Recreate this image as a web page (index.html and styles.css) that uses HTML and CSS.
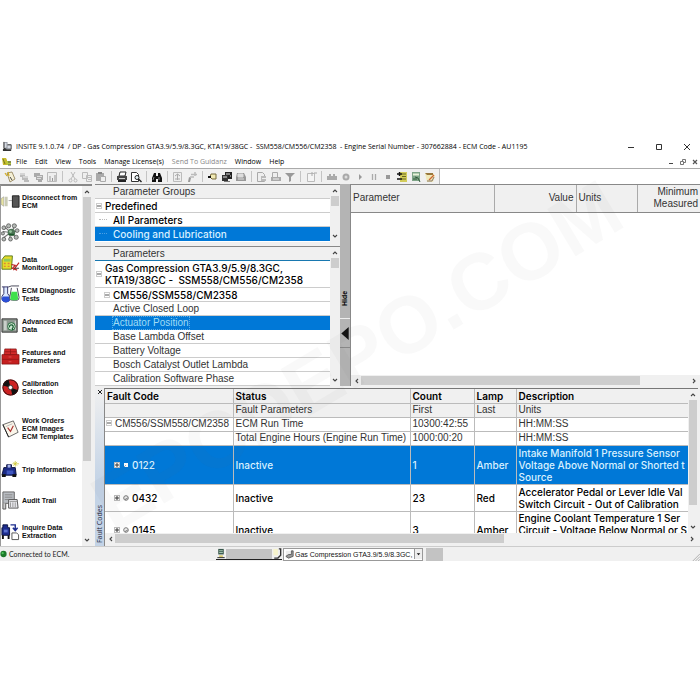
FILE: index.html
```
<!DOCTYPE html>
<html lang="en">
<head>
<meta charset="utf-8">
<title>INSITE 9.1.0.74</title>
<link rel="stylesheet" href="styles.css">
</head>
<body>
<svg class="defs" aria-hidden="true">
  <defs>
    <symbol id="up" viewBox="0 0 8 8"><path d="M2 5 4 3 6 5" fill="none" stroke="#444" stroke-width="1.1"/></symbol>
    <symbol id="down" viewBox="0 0 8 8"><path d="M2 3 4 5 6 3" fill="none" stroke="#444" stroke-width="1.1"/></symbol>
    <symbol id="left" viewBox="0 0 8 8"><path d="M5 2 3 4 5 6" fill="none" stroke="#444" stroke-width="1.1"/></symbol>
    <symbol id="right" viewBox="0 0 8 8"><path d="M3 2 5 4 3 6" fill="none" stroke="#444" stroke-width="1.1"/></symbol>
    <symbol id="minus" viewBox="0 0 6 6"><rect x=".5" y=".5" width="5" height="5" fill="#fff" stroke="#ccc"/><path d="M1 3h4" stroke="#555"/></symbol>
    <symbol id="plus" viewBox="0 0 6 6"><rect x=".5" y=".5" width="5" height="5" fill="#fff" stroke="#bbb"/><path d="M1 3h4M3 1v4" stroke="#333"/></symbol>
    <symbol id="ball" viewBox="0 0 6 6"><circle cx="3" cy="3" r="2.3" fill="#eee" stroke="#777"/><path d="M2 4.5 4.7 3" stroke="#555" stroke-width=".7"/></symbol>
    <symbol id="flag" viewBox="0 0 6 6"><path d="M1 1h4v4H1z" fill="#fff"/><path d="M1 5l2-2" stroke="#9ab"/></symbol>
  </defs>
</svg>
<div class="window">
  <header class="titlebar">
    <svg class="ic12" viewBox="0 0 12 12"><path d="M2 1h4v3h4v5H4V7H2z" fill="#8d929c"/><path d="M3 2h2v5H3zM6 5h4v3H6z" fill="#d7dbe2"/><path d="M1 9l2-2 2 2h5v2H1z" fill="#333"/><path d="M2 1v7M6 4h4M10 4v5" stroke="#444" fill="none"/></svg>
    <h1>INSITE 9.1.0.74&nbsp; / DP - Gas Compression GTA3.9/5.9/8.3GC, KTA19/38GC -&nbsp; SSM558/CM556/CM2358&nbsp; - Engine Serial Number - 307662884 - ECM Code - AU1195</h1>
    <div class="winbtns">
      <button aria-label="Minimize"><svg viewBox="0 0 8 8"><path d="M1 4.5h6" stroke="#333"/></svg></button>
      <button aria-label="Maximize"><svg viewBox="0 0 8 8"><path d="M1.5 1.5h5v5h-5z" fill="none" stroke="#333"/></svg></button>
      <button aria-label="Close"><svg viewBox="0 0 8 8"><path d="M1 1l6 6M7 1l-6 6" stroke="#333"/></svg></button>
    </div>
  </header>
  <nav class="menubar">
    <svg class="ic10" viewBox="0 0 10 10"><path d="M0 1h4l1 2v5H1z" fill="#c9b92d"/><path d="M1 2l2 5" stroke="#6f7d20" fill="none"/><path d="M4 4h5v4H5z" fill="#b6c93b"/><path d="M6 5h3M6 8h3" stroke="#555"/></svg>
    <button>File</button><button>Edit</button><button>View</button><button>Tools</button><button>Manage License(s)</button><button disabled>Send To Guidanz</button><button>Window</button><button>Help</button>
    <div class="docbtns">
      <button aria-label="Minimize document"><svg viewBox="0 0 8 8"><path d="M2 5.5h4" stroke="#444"/></svg></button>
      <button aria-label="Restore document"><svg viewBox="0 0 8 8"><path d="M1.500 3.500h3v3h-3zM3.500 3V1.500h3v3H5" fill="none" stroke="#666" stroke-width=".9"/></svg></button>
      <button aria-label="Close document"><svg viewBox="0 0 8 8"><path d="M2 2l4 4M6 2l-4 4" stroke="#555" stroke-width="1.200"/></svg></button>
    </div>
  </nav>
  <div class="toolbar" role="toolbar">
    <div class="tools">
      <button aria-label="Connect"><svg viewBox="0 0 12 12"><path d="M3 2l5-1 3 7-5 3z" fill="#f4efd6" stroke="#8a7a50" stroke-width=".8"/><path d="M1 2l2 3M4 1l1 4" stroke="#d2ad22" stroke-width="1.200"/><path d="M6 6l2 3" stroke="#444"/></svg></button>
      <button aria-label="Template" disabled><svg viewBox="0 0 12 12"><path d="M2 2h5v4H2zM4 5h6v4H4zM6 9h5v2H6z" fill="#bbb"/><path d="M2 3h5M5 6h5" stroke="#eee"/></svg></button>
      <button aria-label="Transfer" disabled><svg viewBox="0 0 12 12"><path d="M2 2h6v4H2zM4 4h7v5H4zM6 9h4v2H6z" fill="#aaa"/><path d="M5 5.500h5M5 7.500h4" stroke="#ddd"/></svg></button>
      <button aria-label="Chart" disabled><svg viewBox="0 0 12 12"><path d="M1.500 1.500h9v9h-9z" fill="#eee" stroke="#bbb"/><path d="M4 10V5M6.500 10V7M9 10V4" stroke="#999"/></svg></button>
      <i></i>
      <button aria-label="Cut" disabled><svg viewBox="0 0 12 12"><path d="M4 1l4 7M8 1L4 8" stroke="#bbb"/><circle cx="3.500" cy="9.500" r="1.500" fill="none" stroke="#bbb"/><circle cx="8.500" cy="9.500" r="1.500" fill="none" stroke="#bbb"/></svg></button>
      <button aria-label="Copy" disabled><svg viewBox="0 0 12 12"><path d="M1.500 1.500h5v6h-5zM5.500 4.500h5v6h-5z" fill="#eee" stroke="#bbb"/><path d="M7 6.500h3M7 8.500h3" stroke="#bbb"/></svg></button>
      <button aria-label="Paste" disabled><svg viewBox="0 0 12 12"><path d="M1 2h8v8H1z" fill="#aaa"/><path d="M3 1h4v2H3z" fill="#888"/><path d="M5.500 5.500h5v5h-5z" fill="#eee" stroke="#aaa"/></svg></button>
      <i></i>
      <button aria-label="Print"><svg viewBox="0 0 12 12"><path d="M4 1h6l-1 4H3z" fill="#fff" stroke="#222"/><path d="M1 5h10v4H1z" fill="#444"/><path d="M2 9h8v2H2z" fill="#222"/><path d="M3 7.500h6" stroke="#ccc"/></svg></button>
      <button aria-label="Print preview"><svg viewBox="0 0 12 12"><path d="M1.500 1.500h5l2 2v7h-7z" fill="#fff" stroke="#333"/><circle cx="7" cy="6.500" r="2" fill="#e8f4f8" stroke="#222"/><path d="M8.500 8l3 3" stroke="#222" stroke-width="1.400"/></svg></button>
      <i></i>
      <button aria-label="Find"><svg viewBox="0 0 12 12"><path d="M3 2h2v3h2V2h2l2 5v4H7V8H5v3H1V7z" fill="#111"/><path d="M3 6l-1 3M8 6v3" stroke="#fff" stroke-width=".5"/></svg></button>
      <i></i>
      <button aria-label="Detail" disabled><svg viewBox="0 0 12 12"><path d="M1.500 1.500h8v9h-8z" fill="#eee" stroke="#bbb"/><path d="M5.500 3v6M3 5l2.500-2L8 5M3 8h5" fill="none" stroke="#aaa"/></svg></button>
      <button aria-label="Reset" disabled><svg viewBox="0 0 12 12"><path d="M5 3.500h6M9 1v4M4 6h4" stroke="#bbb" stroke-width="1.500"/><path d="M3 6l2 1-1 4H2z" fill="#999"/></svg></button>
      <i></i>
      <button aria-label="Disconnect"><svg viewBox="0 0 12 12"><path d="M4 3h5v5H5L3 6z" fill="#f1eab4" stroke="#776a3c"/><path d="M1 6h3" stroke="#111" stroke-width="2"/></svg></button>
      <button aria-label="Work order"><svg viewBox="0 0 12 12"><path d="M4 1h7v7H4z" fill="#222"/><path d="M1 4h6v6H1z" fill="#333"/><path d="M5 3h4M2 6h4M9 5h1" stroke="#ddd"/><path d="M3 10h6v1H3z" fill="#777"/></svg></button>
      <button aria-label="Save" disabled><svg viewBox="0 0 12 12"><path d="M2 2h7l2 4v4H1V6z" fill="#999"/><path d="M3 3h5v3H3zM3 8h6" fill="#ddd" stroke="#ddd"/></svg></button>
      <i></i>
      <button aria-label="Report" disabled><svg viewBox="0 0 12 12"><path d="M1.500 1.500h5l2 2v7h-7z" fill="#eee" stroke="#aaa"/><path d="M5 5h5v5H5z" fill="#bbb"/><path d="M6 7.500h4" stroke="#eee"/></svg></button>
      <button aria-label="Snapshot" disabled><svg viewBox="0 0 12 12"><path d="M2.500 1.500h5v5h-5z" fill="#eee" stroke="#aaa"/><path d="M1 6h10v4H1z" fill="#aaa"/><path d="M3 8h6" stroke="#eee"/></svg></button>
      <button aria-label="Filter" disabled><svg viewBox="0 0 12 12"><path d="M1 2h10L7 6v4l-2 1V6z" fill="#999"/></svg></button>
      <i></i>
      <button aria-label="New" disabled><svg viewBox="0 0 12 12"><path d="M2.500 2.500h7v8h-7z" fill="#f4f4f4" stroke="#bbb"/><path d="M7 1v4M9 2h3" stroke="#aaa"/></svg></button>
      <i></i>
      <button aria-label="Log" disabled><svg viewBox="0 0 12 12"><path d="M1 5h10v4H1zM3 3h2v6H3zM7 3h2v6H7z" fill="#aaa"/></svg></button>
      <button aria-label="Record" disabled><svg viewBox="0 0 12 12"><circle cx="6" cy="6" r="3.500" fill="#aaa"/><circle cx="6" cy="6" r="1.500" fill="#ddd"/></svg></button>
      <button aria-label="Play" disabled><svg viewBox="0 0 12 12"><path d="M5 3l3 3-3 3z" fill="#999"/></svg></button>
      <button aria-label="Pause" disabled><svg viewBox="0 0 12 12"><path d="M4.500 3v6M7.500 3v6" stroke="#aaa" stroke-width="1.300"/></svg></button>
      <button aria-label="Stop" disabled><svg viewBox="0 0 12 12"><path d="M4 4h4v4H4z" fill="#999"/></svg></button>
      <button aria-label="Add or remove"><svg viewBox="0 0 12 12"><path d="M4 1h7v10H4z" fill="#d3cc5a"/><path d="M6 3h4M6 5.500h4M6 8h4" stroke="#6a6a20"/><path d="M1 3h5M3.500 1v4M1 8h5" stroke="#111" stroke-width="1.400"/></svg></button>
      <button aria-label="Logger setup"><svg viewBox="0 0 12 12"><path d="M2 1h8v9H2z" fill="#7ea487"/><path d="M3 2.500h6v2H3z" fill="#e8f2d8"/><path d="M5 6l3 1 2 4M3 8h4" stroke="#335a3b" fill="none"/></svg></button>
      <button aria-label="Edit list"><svg viewBox="0 0 12 12"><path d="M1 2h8l2 3-2 6H3z" fill="#f0e8b8"/><path d="M1 2h8v2H3z" fill="#97763c"/><path d="M10 4L5 9" stroke="#c63" stroke-width="1.300"/><path d="M3 10h5l2-4" stroke="#876" fill="none"/></svg></button>
    </div>
  </div>
  <main class="work">
    <aside class="sidebar">
      <ul>
        <li><a href="#"><svg viewBox="0 0 20 20"><path d="M0 7l3-2v10l-3-2z" fill="#e8e4a0" stroke="#999" stroke-width=".6"/><path d="M4 5h3v10H4z" fill="#c9cbb5"/><path d="M8 9h4" stroke="#aaa"/><path d="M12 4h7v12h-7z" fill="#555" stroke="#222"/></svg><span>Disconnect from<br>ECM</span></a></li>
        <li><a href="#"><svg viewBox="0 0 20 20"><g stroke="#777" stroke-width="1.200"><path d="M10 10L3 3M10 10L16 2M10 10L18 8M10 10L17 16M10 10L9 18M10 10L2 16M10 10L2 9"/></g><g fill="#b4b9b5" stroke="#444" stroke-width=".7"><circle cx="3" cy="5" r="2"/><circle cx="8" cy="3" r="2.200"/><circle cx="14" cy="3" r="2.200"/><circle cx="17" cy="8" r="2"/><circle cx="16" cy="15" r="2.200"/><circle cx="10" cy="17" r="2"/><circle cx="3" cy="17" r="2"/><circle cx="2" cy="11" r="1.700"/></g><circle cx="11" cy="10" r="4" fill="#4d7556"/><circle cx="10" cy="9" r="1.500" fill="#94c49b"/><path d="M8 12h6" stroke="#152"/></svg><span>Fault Codes</span></a></li>
        <li><a href="#"><svg viewBox="0 0 20 20"><path d="M1 6l3-4h8l-1 14H1z" fill="#e6dc2a" stroke="#5a7a20"/><path d="M3 5h7v3H3z" fill="#8fc95a"/><path d="M3 10h2M7 10h2M3 13h2M7 13h2" stroke="#d83" stroke-width="1.500"/><path d="M11 11l4 1-3 3 5 2M13 17l6-8" stroke="#b22" fill="none" stroke-width="1.200"/><path d="M14 15h5" stroke="#333"/></svg><span>Data<br>Monitor/Logger</span></a></li>
        <li><a href="#"><svg viewBox="0 0 20 20"><path d="M1 2h7M3 2v7q-3 3-2 6 1 3 4 3t5-3q0-3-3-6V2" fill="#dce9ff" stroke="#336"/><path d="M2 12h7q2 4-2 6-4 1-6-2-1-2 1-4z" fill="#2b4fd6"/><path d="M8 2l3-1h8M11 3l-2 11q0 2 3 2h5q2 0 2-3L17 3" fill="#fff" stroke="#445"/><path d="M11 7h6l1 7q0 2-2 2h-4q-3 0-2-3z" fill="#3fe04c"/></svg><span>ECM Diagnostic<br>Tests</span></a></li>
        <li><a href="#"><svg viewBox="0 0 20 20"><path d="M1 3h16v14H1z" fill="#8e9790" stroke="#333"/><path d="M3 5h3v10H3z" fill="#c9cfca"/><path d="M15 5v10" stroke="#ddd"/><circle cx="11" cy="11" r="4" fill="#cfe5d2" stroke="#236b3a"/><path d="M9 12a2 2 0 1 1 3 1v2" stroke="#165c30" fill="none" stroke-width="1.300"/></svg><span>Advanced ECM<br>Data</span></a></li>
        <li><a href="#"><svg viewBox="0 0 20 20"><path d="M4 2h12l1 7H3z" fill="#d32b2b" stroke="#7a1010" stroke-width=".7"/><path d="M1 8h18v10H1z" fill="#c51f1f" stroke="#7a1010" stroke-width=".7"/><path d="M1 13h18M4 5h12M10 2v6" stroke="#8f1515" stroke-width=".8"/><path d="M8 10.500h3M8 15.500h3" stroke="#e06060" stroke-width=".8"/></svg><span>Features and<br>Parameters</span></a></li>
        <li><a href="#"><svg viewBox="0 0 20 20"><circle cx="10" cy="10" r="8.500" fill="#c22"/><path d="M10 10L8 1.700A8.500 8.500 0 0 0 1.800 8zM10 10l8 3a8.500 8.500 0 0 1-6 5.200z" fill="#111"/><circle cx="10" cy="10" r="8" fill="none" stroke="#311"/><circle cx="10" cy="10" r="2.300" fill="#fff" stroke="#333"/></svg><span>Calibration<br>Selection</span></a></li>
        <li><a href="#"><svg viewBox="0 0 20 20"><path d="M2 6l11-4 5 12-10 5z" fill="#fbf6ea" stroke="#666"/><path d="M5 8l7-3" stroke="#bbb"/><path d="M7 9l3 4 3-6" fill="none" stroke="#a33" stroke-width="1.200"/><path d="M2 6l6 13" stroke="#222"/></svg><span>Work Orders<br>ECM Images<br>ECM Templates</span></a></li>
        <li><a href="#"><svg viewBox="0 0 20 20"><path d="M6 5h5v3h4l1 8H1l2-8h3z" fill="#1c2c86" stroke="#0c123f"/><path d="M6 11h7v4H6z" fill="#3f57c0"/><path d="M1 15h4v3H1zM12 15h4v3h-4z" fill="#111"/><path d="M7 5h3v3H7z" fill="#a9b5ea"/><path d="M15 1v6M12 4h7M13 2l4 4M17 2l-4 4" stroke="#c9c334" stroke-width=".8"/></svg><span>Trip Information</span></a></li>
        <li><a href="#"><svg viewBox="0 0 20 20"><path d="M2 1h12v12H2z" fill="#b9bdc2" stroke="#666"/><path d="M4 4h8M4 6.500h8M4 9h4" stroke="#888"/><path d="M8 9h9l1 9H8z" fill="#e9e9ee" stroke="#555"/><path d="M10 12v5M12.500 12v5M15 12v5M9 11h8" stroke="#999"/><path d="M2 13v6h3v-6" stroke="#555" fill="#ccc"/></svg><span>Audit Trail</span></a></li>
        <li><a href="#"><svg viewBox="0 0 20 20"><path d="M2 3h5v3h2v8H1V6h1z" fill="#1d2d8e" stroke="#0c123f"/><path d="M3 8h4v3H3z" fill="#5a70d0"/><path d="M1 14h2v4H1zM7 14h2v4H7z" fill="#111"/><path d="M10 3h5v5M12.500 6l2.500 3 2.500-3" fill="none" stroke="#1d2d8e" stroke-width="1.500"/><path d="M11.500 11.500h5l2 2v5h-7z" fill="#fff" stroke="#555"/></svg><span>Inquire Data<br>Extraction</span></a></li>
      </ul>
      <div class="vbar"><svg><use href="#up"/></svg><b class="th-side"></b><svg class="end"><use href="#down"/></svg></div>
    </aside>
    <div class="content">
      <section class="upper">
        <div class="trees">
          <div class="tree groups">
            <ul>
              <li class="head deep">Parameter Groups</li>
              <li class="strong"><svg><use href="#minus"/></svg>Predefined</li>
              <li class="strong deep dots">All Parameters</li>
              <li class="strong deep dots sel">Cooling and Lubrication</li>
            </ul>
            <div class="vbar"><svg><use href="#up"/></svg><b></b><svg class="end"><use href="#down"/></svg></div>
          </div>
          <div class="tree params">
            <ul>
              <li class="head deep">Parameters</li>
              <li class="strong two"><svg><use href="#minus"/></svg><span>Gas Compression GTA3.9/5.9/8.3GC,<br>KTA19/38GC -&nbsp; SSM558/CM556/CM2358</span></li>
              <li class="strong sub"><svg><use href="#minus"/></svg>CM556/SSM558/CM2358</li>
              <li class="deep">Active Closed Loop</li>
              <li class="deep sel"><span class="focus">Actuator Position</span></li>
              <li class="deep">Base Lambda Offset</li>
              <li class="deep">Battery Voltage</li>
              <li class="deep">Bosch Catalyst Outlet Lambda</li>
              <li class="deep">Calibration Software Phase</li>
            </ul>
            <div class="vbar"><svg><use href="#up"/></svg><b></b><svg class="end"><use href="#down"/></svg></div>
          </div>
        </div>
        <div class="splitter">
          <span class="hide">Hide</span>
          <button aria-label="Hide parameter tree"><svg viewBox="0 0 10 14"><path d="M9 0v14L1 7z" fill="#111"/></svg></button>
        </div>
        <div class="monitor">
          <table>
            <colgroup><col><col class="c-val"><col class="c-unit"><col class="c-min"></colgroup>
            <tr><th>Parameter</th><th class="r">Value</th><th>Units</th><th class="r">Minimum<br>Measured</th></tr>
          </table>
          <div class="hbar"><svg><use href="#left"/></svg><b class="th-mon"></b><svg class="end"><use href="#right"/></svg></div>
        </div>
      </section>
      <section class="faults">
        <div class="tab"><button aria-label="Close fault codes"><svg viewBox="0 0 8 8"><path d="M2 2l4 4M6 2l-4 4" stroke="#222"/></svg></button><span>Fault Codes</span></div>
        <div class="grid">
          <div class="clip">
            <table>
              <colgroup><col class="f1"><col class="f2"><col class="f3"><col class="f4"><col></colgroup>
              <thead>
                <tr class="strong title"><th>Fault Code</th><th>Status</th><th>Count</th><th>Lamp</th><th>Description</th></tr>
                <tr><th></th><th>Fault Parameters</th><th>First</th><th>Last</th><th>Units</th></tr>
              </thead>
              <tbody>
                <tr><td class="root"><svg><use href="#minus"/></svg>CM556/SSM558/CM2358</td><td>ECM Run Time</td><td>10300:42:55</td><td></td><td>HH:MM:SS</td></tr>
                <tr><td></td><td>Total Engine Hours (Engine Run Time)</td><td>1000:00:20</td><td></td><td>HH:MM:SS</td></tr>
                <tr class="strong sel"><td class="code"><svg><use href="#plus"/></svg><svg><use href="#flag"/></svg>0122</td><td>Inactive</td><td>1</td><td>Amber</td><td>Intake Manifold 1 Pressure Sensor<br>Voltage Above Normal or Shorted t<br>Source</td></tr>
                <tr class="strong"><td class="code"><svg><use href="#plus"/></svg><svg><use href="#ball"/></svg>0432</td><td>Inactive</td><td>23</td><td>Red</td><td>Accelerator Pedal or Lever Idle Val<br>Switch Circuit - Out of Calibration</td></tr>
                <tr class="strong tall"><td class="code"><svg><use href="#plus"/></svg><svg><use href="#ball"/></svg>0145</td><td>Inactive</td><td>3</td><td>Amber</td><td>Engine Coolant Temperature 1 Ser<br>Circuit - Voltage Below Normal or S</td></tr>
              </tbody>
            </table>
            <div class="vbar"><svg><use href="#up"/></svg><b class="th-fault"></b><svg class="end"><use href="#down"/></svg></div>
          </div>
          <div class="hbar"><svg><use href="#left"/></svg><b class="th-fh"></b><svg class="end"><use href="#right"/></svg></div>
        </div>
      </section>
    </div>
  </main>
  <footer class="status">
    <div class="conn"><svg viewBox="0 0 8 8"><circle cx="4" cy="4" r="3.600" fill="#1d7a2a"/><circle cx="3" cy="3" r="1.300" fill="#4fc45c"/></svg>Connected to ECM.</div>
    <div class="link"><svg viewBox="0 0 10 12"><path d="M2 1h6v6H2z" fill="#37564a"/><path d="M3 3h4M3 5h4" stroke="#b7d6c2"/><path d="M3 8h4v2H3z" fill="#d9c96a"/><path d="M1 10.500h8" stroke="#222"/></svg><b></b><svg viewBox="0 0 10 12"><path d="M1 1h5v7H1z" fill="#f6f3cc"/><path d="M7 1h2v7l-3 3H2" fill="none" stroke="#333" stroke-width="1.500"/></svg></div>
    <label class="ds"><svg viewBox="0 0 12 12"><path d="M2 2h5v8H2z" fill="#eee"/><path d="M2 8l3 2 5-2V2H8v4H5z" fill="#999" stroke="#444" stroke-width=".8"/></svg><select aria-label="Data source"><option>Gas Compression GTA3.9/5.9/8.3GC, I</option></select><svg class="arrow" viewBox="0 0 8 8"><path d="M2 3h4L4 5.500z" fill="#111"/></svg></label>
    <b class="block"></b>
    <svg class="grip" viewBox="0 0 10 10"><path d="M2 10l8-8M5 10l5-5M8 10l2-2" stroke="#aaa"/></svg>
  </footer>
  <div class="mark" aria-hidden="true">EPCDEPO.COM</div>
</div>
</body>
</html>
```
FILE: styles.css
```
* { box-sizing: border-box; }
body { margin: 0; background: #fff; color: #333; font: 10px/12px "Liberation Sans", Arial, sans-serif; }
ul { margin: 0; padding: 0; list-style: none; }
button { border: 0; padding: 0; background: none; color: inherit; font: inherit; }
svg { display: block; flex: none; }
.defs { position: absolute; width: 0; height: 0; }
.window { position: relative; margin-top: 138px; overflow: hidden; }

.titlebar { display: flex; align-items: center; height: 17px; padding-left: 2px; gap: 3px; color: #000; }
.titlebar h1 { margin: 0; flex: 1; font: 400 7px/12px "Open Sans", "Noto Sans", sans-serif; white-space: nowrap; }
.ic12 { width: 11px; height: 11px; }
.ic10 { width: 10px; height: 10px; margin-right: -4px; }
.winbtns { display: flex; gap: 20px; padding-right: 9px; }
.winbtns svg { width: 8px; height: 8px; }

.menubar { display: flex; align-items: center; gap: 8px; height: 13px; padding-left: 2px; font: 7px/12px "Open Sans", "Noto Sans", sans-serif; color: #000; }
.menubar button:disabled { color: #888; }
.docbtns { display: flex; gap: 4px; margin-left: auto; padding-right: 1px; }
.docbtns svg { width: 8px; height: 8px; }

.toolbar { display: flex; height: 16px; border-top: 1px solid #aaa; background: #fff; }
.tools { display: flex; align-items: center; padding: 0 2px 0 3px; background: #f0f0f0; border-right: 1px solid #bbb; }
.tools button { width: 14px; padding: 0 1px; }
.tools svg { width: 12px; height: 12px; }
.tools i { width: 1px; height: 11px; margin: 0 3px; background: #c4c4c4; }

.work { display: flex; height: 362px; background: #f0f0f0; }

.vbar { display: flex; flex-direction: column; align-items: center; flex: none; width: 10px; padding: 1px 0; background: #f0f0f0; }
.vbar svg, .hbar svg { width: 8px; height: 10px; }
.vbar b { width: 8px; height: 10px; background: #cdcdcd; }
.vbar .end { margin-top: auto; }
.hbar { display: flex; align-items: center; flex: none; height: 11px; padding: 0 2px; background: #f0f0f0; }
.hbar b { height: 9px; background: #cdcdcd; }
.hbar .end { margin-left: auto; }
.vbar .th-side { height: 264px; }
.vbar .th-fault { height: 105px; }
.th-mon { width: 81%; }
.th-fh { width: 66%; }

.sidebar { display: flex; flex: none; width: 92px; margin-right: 3px; background: #fff; border-top: 2px solid #888; border-left: 1px solid #999; overflow: hidden; }
.sidebar ul { flex: 1; }
.sidebar li { display: grid; align-items: center; min-height: 31px; }
.sidebar li:nth-child(8) { min-height: 51px; }
.sidebar a { display: flex; align-items: center; gap: 2px; color: #111; text-decoration: none; font: bold 7px/8px "Liberation Sans", Arial, sans-serif; white-space: nowrap; }
.sidebar a svg { width: 19px; height: 19px; }

.content { display: flex; flex-direction: column; flex: 1; min-width: 0; }
.upper { display: flex; height: 202px; }
.trees { display: flex; flex-direction: column; gap: 4px; flex: none; width: 245px; }
.tree { display: flex; border-top: 1px solid #888; overflow: hidden; }
.tree ul { flex: 1; background: #fff; }
.tree li { display: flex; align-items: center; height: 14px; padding-left: 1px; border-bottom: 1px solid #ccc; white-space: nowrap; }
.tree li svg { width: 6px; height: 6px; margin-right: 3px; }
.tree .deep { padding-left: 18px; }
.tree .sub { padding-left: 9px; }
.tree .head { background: #f0f0f0; }
.tree .two { height: 27px; }
.tree .dots::before { content: ""; width: 8px; margin: 0 6px 0 -14px; border-top: 1px dotted #bbb; }
.tree .sel, .grid .sel { background: #0078d7; color: #d8f0ff; border-color: #0078d7; }
.tree .sel::before { border-color: #4a9fe4; }
.params .head { border-bottom-color: #1878b0; }
.params .sel { color: #9fdcf5; }
.focus { outline: 1px dotted #5aaee8; }
.strong { font: 500 10px/12px Inter, "Liberation Sans", sans-serif; color: #000; }
.title { font-weight: 600; }
.groups { height: 58px; }
.params { flex: 1; }

.splitter { display: flex; flex-direction: column; flex: none; width: 11px; background: #b4b4b4; border-right: 1px solid #888; padding-top: 107px; }
.hide { writing-mode: vertical-rl; transform: rotate(180deg); font: bold 7px/10px "Liberation Sans", sans-serif; color: #000; height: 27px; padding-top: 12px; }
.splitter button { height: 30px; padding: 8px 0; border-top: 1px solid #eee; border-bottom: 1px solid #888; }
.splitter svg { width: 10px; height: 13px; }

.monitor { display: flex; flex-direction: column; flex: 1; min-width: 0; background: #fff; border-top: 1px solid #888; }
.monitor .hbar { margin-top: auto; }
table { width: 100%; table-layout: fixed; border-collapse: collapse; }
th, td { padding: 0 2px; text-align: left; font-weight: inherit; white-space: nowrap; overflow: hidden; }
.monitor th { height: 27px; background: #f0f0f0; border-right: 1px solid #aaa; border-bottom: 1px solid #888; }
.monitor th:last-child { border-right: 0; }
.monitor .r { text-align: right; }
.c-val { width: 82px; }
.c-unit { width: 61px; }
.c-min { width: 63px; }

.faults { display: flex; height: 160px; padding-top: 2px; }
.tab { display: flex; flex-direction: column; justify-content: space-between; align-items: center; flex: none; width: 9px; padding-bottom: 3px; background: linear-gradient(#f0f0f0, #c3d3e6 60%); }
.tab svg { width: 8px; height: 8px; }
.tab span { writing-mode: vertical-rl; transform: rotate(180deg); font: 7px/9px "Open Sans", sans-serif; color: #223; }
.grid { display: flex; flex-direction: column; flex: 1; min-width: 0; margin-right: 2px; border-top: 1px solid #777; border-left: 1px solid #888; }
.clip { display: flex; height: 144px; overflow: hidden; }
.clip table { flex: 1; min-width: 0; width: 0; background: #fff; height: 0; }
.clip th, .clip td { height: 14px; padding: 0 2px; border-right: 1px solid #bbb; border-bottom: 1px solid #bbb; }
.clip .strong td { padding: 1px 2px; }
.clip th { background: #f0f0f0; }
.clip th:last-child, .clip td:last-child { border-right: 0; }
.f1 { width: 128px; }
.f2 { width: 177px; }
.f3 { width: 64px; }
.f4 { width: 42px; }
.clip td svg { display: inline-block; width: 6px; height: 6px; margin-right: 3px; vertical-align: 1px; }
.clip .root { padding-left: 1px; }
.clip .strong .code { padding-left: 9px; }
.clip .tall td { height: 38px; }
.clip .tall td:last-child { vertical-align: top; padding-top: 0; }

.status { display: flex; align-items: center; height: 15px; border-top: 1px solid #ccc; background: #f0f0f0; font: 7px/12px Lato, "Noto Sans", sans-serif; color: #222; }
.conn { display: flex; align-items: center; gap: 2px; flex: none; width: 216px; }
.conn svg { width: 7px; height: 8px; }
.link { display: flex; align-items: center; width: 66px; height: 12px; border-bottom: 1px solid #222; }
.link svg { width: 10px; height: 11px; }
.link b { flex: 1; height: 10px; background: #c3c3c3; }
.ds { display: flex; align-items: center; width: 140px; height: 13px; margin: 0 3px 0 1px; border: 1px solid #999; background: #fff; }
.ds > svg { width: 11px; height: 11px; }
.ds select { flex: 1; min-width: 0; height: 11px; padding: 0; border: 0; background: none; appearance: none; font: 7px/11px "Liberation Sans", sans-serif; color: #111; }
.ds .arrow { width: 8px; height: 10px; background: #eee; border-left: 1px solid #999; }
.block { width: 17px; height: 13px; background: #c3c3c3; }
.grip { width: 9px; height: 9px; margin: auto 0 0 auto; }

.mark { position: absolute; left: 51%; top: 218px; color: rgba(110, 110, 110, .04); font: bold 80px/80px "Liberation Sans", sans-serif; white-space: nowrap; transform: translate(-50%, -50%) rotate(-31deg); pointer-events: none; }
```
